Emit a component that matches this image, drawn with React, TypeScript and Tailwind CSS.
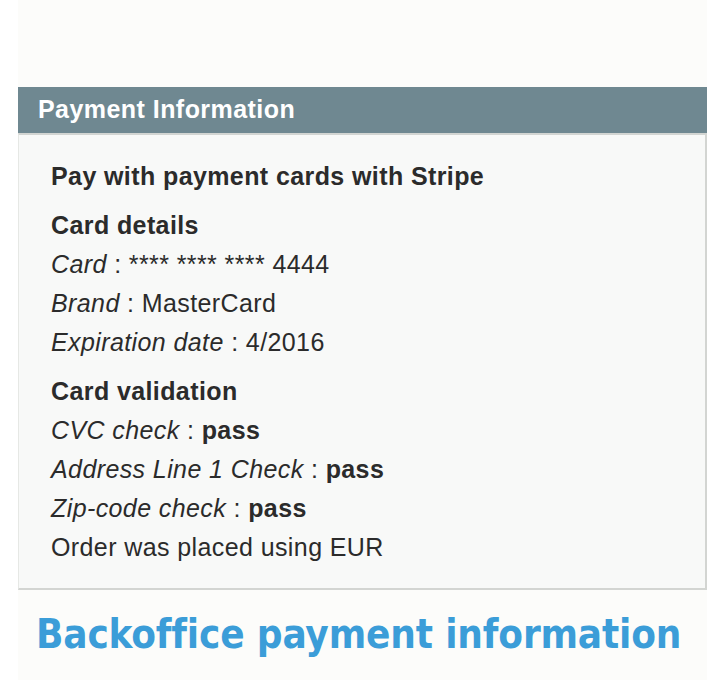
import React from "react";

const Line = ({ label, value, bold }: { label?: string; value: string; bold?: boolean }) => (
  <div className="h-[39px] leading-[39px] whitespace-nowrap">
    {label && <em className="italic">{label}</em>}
    {label && " : "}
    {bold ? <strong className="font-bold">{value}</strong> : value}
  </div>
);

export default function App() {
  return (
    <div className="min-h-[680px] w-full bg-white">
      <div
        className="ml-[18px] w-[689px] min-h-[680px] bg-[#fcfcfa] pt-[87px]"
        style={{ fontFamily: '"Liberation Sans", Arial, sans-serif' }}
      >
        <div className="h-[46px] bg-[#6f8891] pl-[20px] flex items-center text-white font-bold text-[25px] tracking-[0.45px]">
          Payment Information
        </div>
        <div className="border-t-2 border-t-[#d2d5d2] border-r-2 border-r-[#d3d5d2] border-b-2 border-b-[#d3d5d2] border-l border-l-[#e6e8e5] bg-[#f8f9f8] pl-[32px] pt-[22px] pb-[21px] text-[25px] tracking-[0.4px] text-[#2b2b2b]">
          <div className="h-[39px] leading-[39px] font-bold whitespace-nowrap">Pay with payment cards with Stripe</div>
          <div className="mt-[10px] h-[39px] leading-[39px] font-bold">Card details</div>
          <Line label="Card" value="**** **** **** 4444" />
          <Line label="Brand" value="MasterCard" />
          <Line label="Expiration date" value="4/2016" />
          <div className="mt-[10px] h-[39px] leading-[39px] font-bold">Card validation</div>
          <Line label="CVC check" value="pass" bold />
          <Line label="Address Line 1 Check" value="pass" bold />
          <Line label="Zip-code check" value="pass" bold />
          <Line value="Order was placed using EUR" />
        </div>
        <div
          className="mt-[20px] pl-[18px] text-[40px] leading-[48px] font-bold text-[#3b9dd8] font-stretch-condensed tracking-[-0.15px] whitespace-nowrap"
          style={{ fontFamily: '"DejaVu Sans Condensed", "DejaVu Sans", sans-serif' }}
        >
          Backoffice payment information
        </div>
      </div>
    </div>
  );
}
